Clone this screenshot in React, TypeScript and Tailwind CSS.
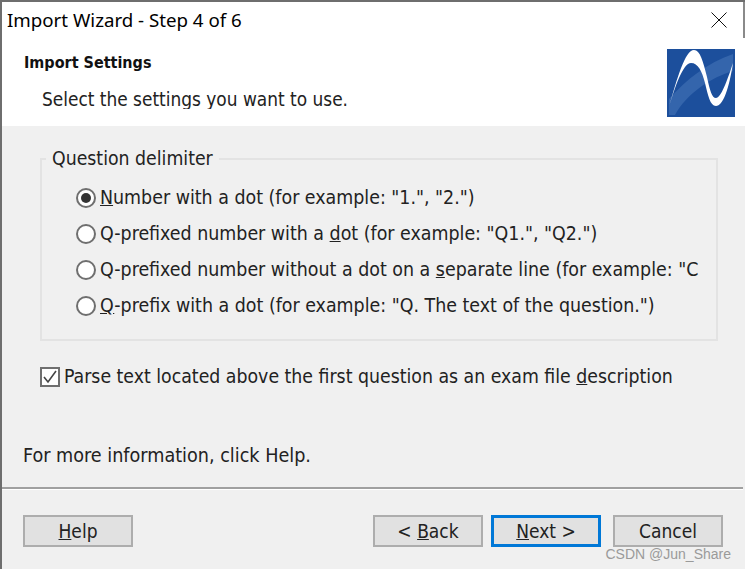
const font = "font-['DejaVu_Sans_Condensed','DejaVu_Sans',sans-serif]";

function Radio({ checked, children }: { checked?: boolean; children: React.ReactNode }) {
  return (
    <div className="flex items-center h-[36px]">
      <span className="w-[20px] h-[20px] rounded-full border-2 border-[#6f6f6f] bg-white flex items-center justify-center shrink-0">
        {checked && <span className="w-[10px] h-[10px] rounded-full bg-[#333333]" />}
      </span>
      <span className="ml-[4px] whitespace-nowrap text-[19.4px] leading-[24px] text-[#222222]">{children}</span>
    </div>
  );
}

function Btn({ children, focus }: { children: React.ReactNode; focus?: boolean }) {
  return (
    <div
      className={
        "w-[110px] h-[32px] flex items-center justify-center text-[19px] leading-[24px] text-[#222222] bg-[#e1e1e1] " +
        (focus ? "border-[3px] border-[#0078d7]" : "border-2 border-[#adadad]")
      }
    >
      <span>{children}</span>
    </div>
  );
}

function Logo() {
  return (
    <svg width="68" height="68" viewBox="0 0 68 68" className="shrink-0">
      <rect width="68" height="68" fill="#1c4f9c" />
      <path d="M2 50 C20 30 40 14 66 5 L66 22 C45 28 20 44 8 66 L2 66 Z" fill="#3465ac" />
      <path d="M2 58 C10 30 18 1 27 1 C33 1 36 12 40 28 C43 42 45 49 49 49 C54 49 60 32 66 14 C62 40 56 57 49 57 C43 57 41 46 38 34 C35 22 31 14 24 14 C16 14 8 38 2 58 Z" fill="#ffffff" />
    </svg>
  );
}

export default function App() {
  return (
    <div className={"relative w-[745px] h-[569px] overflow-hidden bg-[#f0f0f0] text-[19.3px] flex flex-col border-l-2 border-t-2 border-[#6e6e6e] " + font}>
      <div className="bg-white h-[124px] flex flex-col shrink-0 border-r border-r-white">
        <div className="h-[36px] flex items-center justify-between pl-[5px] pr-[2px] border-r-2 border-r-[#8a8a8a] -mr-px">
          <span className="text-[18.7px] text-black whitespace-nowrap font-['Noto_Sans',sans-serif]">Import Wizard - Step 4 of 6</span>
          <svg width="16" height="16" viewBox="0 0 16 16" className="mr-[14px]">
            <path d="M0.5 0.5 L15.5 15.5 M15.5 0.5 L0.5 15.5" stroke="#111111" strokeWidth="1" fill="none" />
          </svg>
        </div>
        <div className="flex justify-between pl-[22px] pr-[9px] mt-[11px]">
          <div className="flex flex-col">
            <span className="text-[16px] leading-[24px] font-bold text-[#111111] mt-[2px]">Import Settings</span>
            <div className="h-[22px] overflow-hidden ml-[18px] mt-[12px]">
              <span className="block text-[18.9px] leading-[24px] text-[#222222] whitespace-nowrap">Select the settings you want to use.</span>
            </div>
          </div>
          <Logo />
        </div>
      </div>

      <div className="flex-1 flex flex-col pl-[21px] pr-[27px] text-[#222222]">
        <div className="mt-[32px] ml-[17px] border-2 border-[#e3e3e3] h-[183px] relative pl-[34px] pt-[20px]">
          <span className="absolute left-[4px] -top-[13px] px-[6px] bg-[#f0f0f0] leading-[24px] whitespace-nowrap">Question delimiter</span>
          <Radio checked><u>N</u>umber with a dot (for example: "1.", "2.")</Radio>
          <Radio>Q-prefixed number with a <u>d</u>ot (for example: "Q1.", "Q2.")</Radio>
          <Radio>Q-prefixed number without a dot on a <u>s</u>eparate line (for example: "C</Radio>
          <Radio><u>Q</u>-prefix with a dot (for example: "Q. The text of the question.")</Radio>
        </div>

        <div className="flex items-center mt-[24px] ml-[17px]">
          <span className="w-[20px] h-[20px] border-2 border-[#6f6f6f] bg-white flex items-center justify-center shrink-0">
            <svg width="16" height="16" viewBox="0 0 16 16">
              <path d="M2 8 L6 13 L14 2" stroke="#444444" strokeWidth="1.6" fill="none" />
            </svg>
          </span>
          <span className="ml-[4px] whitespace-nowrap leading-[24px]">Parse text located above the first question as an exam file <u>d</u>escription</span>
        </div>

        <div className="mt-[55px] leading-[24px] text-[19.6px]">For more information, click Help.</div>
      </div>

      <div className="h-[2px] bg-[#a0a0a0] border-b border-white box-content mr-[2px]" />
      <div className="h-[79px] shrink-0 flex justify-between items-start pl-[21px] pr-[22px] pt-[25px]">
        <Btn><u>H</u>elp</Btn>
        <div className="flex">
          <Btn>&lt; <u>B</u>ack</Btn>
          <div className="ml-[8px] mr-[12px]"><Btn focus><u>N</u>ext &gt;</Btn></div>
          <Btn>Cancel</Btn>
        </div>
      </div>

      <span className="absolute right-[14px] bottom-[6px] text-[14px] leading-[18px] text-[#9a9a9a] font-['Liberation_Sans',sans-serif] whitespace-nowrap">CSDN @Jun_Share</span>
    </div>
  );
}
